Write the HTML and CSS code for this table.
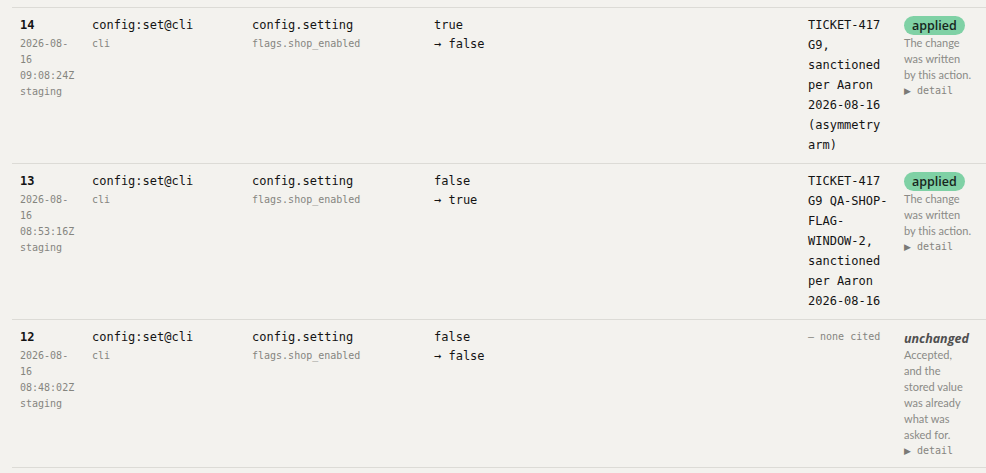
FILE: index.html
```html
<!DOCTYPE html>
<html>
<head>
<meta charset="utf-8">
<link rel="stylesheet" href="styles.css">
</head>
<body>
<table class="log">
  <colgroup>
    <col class="c-id"><col class="c-actor"><col class="c-target"><col class="c-value"><col class="c-ticket"><col class="c-status">
  </colgroup>
  <tbody>
    <tr>
      <td><div class="main strong">14</div><div class="meta">2026-08-16 09:08:24Z</div><div class="meta">staging</div></td>
      <td><div class="main">config:set@cli</div><div class="meta">cli</div></td>
      <td><div class="main">config.setting</div><div class="meta">flags.shop_enabled</div></td>
      <td><div class="main">true</div><div class="main to">→ false</div></td>
      <td><div class="main">TICKET-417 G9, sanctioned per Aaron 2026-08-16 (asymmetry arm)</div></td>
      <td><div class="state"><span class="badge">applied</span></div><div class="desc">The change was written by this action.</div><div class="detail"><span class="tri">▶</span> detail</div></td>
    </tr>
    <tr>
      <td><div class="main strong">13</div><div class="meta">2026-08-16 08:53:16Z</div><div class="meta">staging</div></td>
      <td><div class="main">config:set@cli</div><div class="meta">cli</div></td>
      <td><div class="main">config.setting</div><div class="meta">flags.shop_enabled</div></td>
      <td><div class="main">false</div><div class="main to">→ true</div></td>
      <td><div class="main">TICKET-417 G9 QA-SHOP-FLAG-WINDOW-2, sanctioned per Aaron 2026-08-16</div></td>
      <td><div class="state"><span class="badge">applied</span></div><div class="desc">The change was written by this action.</div><div class="detail"><span class="tri">▶</span> detail</div></td>
    </tr>
    <tr>
      <td><div class="main strong">12</div><div class="meta">2026-08-16 08:48:02Z</div><div class="meta">staging</div></td>
      <td><div class="main">config:set@cli</div><div class="meta">cli</div></td>
      <td><div class="main">config.setting</div><div class="meta">flags.shop_enabled</div></td>
      <td><div class="main">false</div><div class="main to">→ false</div></td>
      <td><div class="none">— none cited</div></td>
      <td><div class="state"><span class="unchanged">unchanged</span></div><div class="desc">Accepted, and the stored value was already what was asked for.</div><div class="detail"><span class="tri">▶</span> detail</div></td>
    </tr>
  </tbody>
</table>
</body>
</html>
```
FILE: styles.css
```css
html, body {
  margin: 0;
  padding: 0;
  background: #f3f2ee;
}
body {
  padding: 7px 0 0 12px;
  font-family: "DejaVu Sans Mono", monospace;
  color: #1c1c1c;
}
.log {
  border-collapse: collapse;
  table-layout: fixed;
  width: 974px;
}
.c-id { width: 72px; }
.c-actor { width: 160px; }
.c-target { width: 182px; }
.c-value { width: 374px; }
.c-ticket { width: 96px; }
.c-status { width: 90px; }
.log td {
  vertical-align: top;
  padding: 7px 8px 8px 8px;
  border-top: 1px solid #dcdbd6;
  border-bottom: 1px solid #dcdbd6;
}
.main {
  font-size: 12px;
  line-height: 20px;
  color: #141414;
  word-wrap: break-word;
}
.strong { font-weight: bold; }
.to { margin-top: -1px; }
.meta {
  font-size: 10px;
  line-height: 16px;
  color: #85857f;
}
.main + .meta { margin-top: 1px; }
.none {
  font-size: 10px;
  line-height: 20px;
  color: #85857f;
}
.state {
  line-height: 20px;
  height: 20px;
  font-family: "Open Sans", sans-serif;
}
.badge {
  display: inline-block;
  background: #7fd1a5;
  color: #17261d;
  font-size: 12.5px;
  font-weight: 600;
  line-height: 19px;
  padding: 0 8px;
  border-radius: 10px;
  margin-top: 1px;
  vertical-align: top;
}
.unchanged {
  font-size: 12.5px;
  font-weight: 700;
  font-style: italic;
  color: #4f4f4f;
}
.desc {
  font-family: "Lato", sans-serif;
  font-size: 11px;
  line-height: 16px;
  color: #8a8a86;
  max-width: 68px;
}
.detail {
  font-size: 10px;
  line-height: 16px;
  color: #85857f;
}
.tri {
  font-family: "DejaVu Sans", sans-serif;
  font-size: 9px;
  color: #7a7a76;
}
```
